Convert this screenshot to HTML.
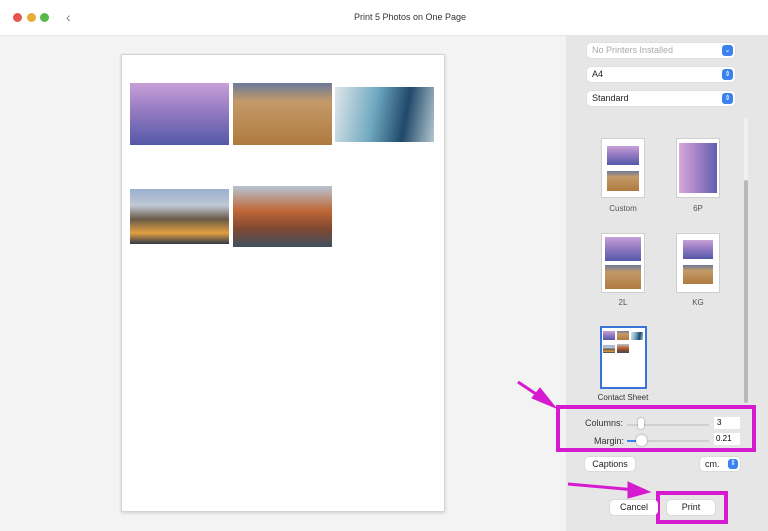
<!DOCTYPE html>
<html><head><meta charset="utf-8"><style>
*{margin:0;padding:0;box-sizing:border-box}
body{width:768px;height:531px;overflow:hidden;background:#f4f4f4;font-family:"Liberation Sans",sans-serif;position:relative}
.abs{position:absolute}
.title{left:0;top:0;width:768px;height:36px;background:#fff;border-bottom:1px solid #e6e6e6}
.dot{width:9px;height:9px;border-radius:50%;top:13px}
.main{left:0;top:36px;width:566px;height:495px;background:#f3f3f3}
.side{left:566px;top:36px;width:202px;height:495px;background:#e6e6e6}
.page{left:121px;top:54px;width:324px;height:458px;background:#fff;border:1px solid #d4d4d4;box-shadow:0 1px 3px rgba(0,0,0,.15)}
.sel{left:587px;width:148px;height:15px;background:#fff;border-radius:4px;font-size:9px;line-height:15px;padding-left:5px;color:#222;box-shadow:0 0 1px rgba(0,0,0,.2)}
.sel i{position:absolute;right:2px;top:2px;width:11px;height:11px;border-radius:3px;background:#3b82f0;color:#fff;font-size:7px;line-height:11px;text-align:center;font-style:normal}
.thumb{background:#fff;border:1px solid #cfcfcf}
.lab{font-size:8px;color:#555;text-align:center;width:80px}
.mt{background:linear-gradient(#c8a0d8 0%,#9a7ec4 40%,#5458a8 100%)}
.sand{background:linear-gradient(#6c7a9a 0%,#c39a68 30%,#b07a40 100%)}
.wave{background:linear-gradient(100deg,#dfe7ea 0%,#6fa8c0 40%,#20486a 70%,#b4c8d0 100%)}
.sier{background:linear-gradient(#9ab0d0 0%,#c0c8d4 30%,#6a5a48 55%,#e0a040 80%,#303848 100%)}
.cap{background:linear-gradient(#b6c4d4 0%,#c06838 40%,#804830 70%,#405060 100%)}
.btn{background:#fff;border-radius:4px;font-size:9px;text-align:center;color:#222;box-shadow:0 0 1px rgba(0,0,0,.3)}
.mg{border:4px solid #d61ad0}
</style></head><body>
<div class="abs title"></div>
<div class="abs dot" style="left:13px;background:#e5574e"></div>
<div class="abs dot" style="left:27px;background:#e8ad35"></div>
<div class="abs dot" style="left:40px;background:#58b848"></div>
<div class="abs" style="left:66px;top:9px;font-size:14px;color:#888">&#8249;</div>
<div class="abs" style="left:0;width:820px;top:12px;text-align:center;font-size:9px;color:#333">Print 5 Photos on One Page</div>
<div class="abs main"></div>
<div class="abs side"></div>
<div class="abs page"></div>
<div class="abs mt" style="left:130px;top:83px;width:99px;height:62px"></div>
<div class="abs sand" style="left:233px;top:83px;width:99px;height:62px"></div>
<div class="abs wave" style="left:335px;top:87px;width:99px;height:55px"></div>
<div class="abs sier" style="left:130px;top:189px;width:99px;height:55px"></div>
<div class="abs cap" style="left:233px;top:186px;width:99px;height:61px"></div>

<div class="abs sel" style="top:43px;color:#aaa">No Printers Installed<i>⌄</i></div>
<div class="abs sel" style="top:67px">A4<i>⇕</i></div>
<div class="abs sel" style="top:91px">Standard<i>⇕</i></div>
<div class="abs" style="left:744px;top:118px;width:4px;height:285px;background:#f0f0f0;border-radius:2px"></div>
<div class="abs" style="left:744px;top:180px;width:4px;height:223px;background:#b8b8b8;border-radius:2px"></div>

<div class="abs thumb" style="left:601px;top:138px;width:44px;height:60px"></div>
<div class="abs mt" style="left:607px;top:146px;width:32px;height:19px"></div>
<div class="abs sand" style="left:607px;top:171px;width:32px;height:20px"></div>
<div class="abs lab" style="left:583px;top:204px">Custom</div>
<div class="abs thumb" style="left:676px;top:138px;width:44px;height:60px"></div>
<div class="abs mt" style="left:679px;top:143px;width:38px;height:50px;background:linear-gradient(90deg,#d8a8d8,#a080c4 50%,#6060b0)"></div>
<div class="abs lab" style="left:658px;top:204px">6P</div>

<div class="abs thumb" style="left:601px;top:233px;width:44px;height:60px"></div>
<div class="abs mt" style="left:605px;top:237px;width:36px;height:24px"></div>
<div class="abs sand" style="left:605px;top:265px;width:36px;height:24px"></div>
<div class="abs lab" style="left:583px;top:298px">2L</div>
<div class="abs thumb" style="left:676px;top:233px;width:44px;height:60px"></div>
<div class="abs mt" style="left:683px;top:240px;width:30px;height:19px"></div>
<div class="abs sand" style="left:683px;top:265px;width:30px;height:19px"></div>
<div class="abs lab" style="left:658px;top:298px">KG</div>

<div class="abs thumb" style="left:600px;top:326px;width:47px;height:63px;border:2px solid #3a72d8"></div>
<div class="abs mt" style="left:603px;top:331px;width:12px;height:9px"></div>
<div class="abs sand" style="left:617px;top:331px;width:12px;height:9px"></div>
<div class="abs wave" style="left:631px;top:332px;width:12px;height:8px"></div>
<div class="abs sier" style="left:603px;top:345px;width:12px;height:8px"></div>
<div class="abs cap" style="left:617px;top:344px;width:12px;height:9px"></div>
<div class="abs lab" style="left:583px;top:393px;color:#333">Contact Sheet</div>

<div class="abs mg" style="left:556px;top:405px;width:200px;height:47px"></div>
<div class="abs" style="left:585px;top:418px;font-size:9px;color:#333">Columns:</div>
<div class="abs" style="left:627px;top:424px;width:82px;height:2px;background:#d0d0d0"></div>
<div class="abs" style="left:638px;top:418px;width:6px;height:11px;background:#fff;border-radius:3px;box-shadow:0 0 2px rgba(0,0,0,.4)"></div>
<div class="abs" style="left:714px;top:417px;width:26px;height:12px;background:#fff;font-size:8px;line-height:12px;padding-left:3px">3</div>
<div class="abs" style="left:594px;top:436px;font-size:9px;color:#333">Margin:</div>
<div class="abs" style="left:627px;top:440px;width:82px;height:2px;background:#d0d0d0"></div>
<div class="abs" style="left:627px;top:440px;width:10px;height:2px;background:#3b82f0"></div>
<div class="abs" style="left:636px;top:435px;width:11px;height:11px;background:#fff;border-radius:50%;box-shadow:0 0 2px rgba(0,0,0,.4)"></div>
<div class="abs" style="left:714px;top:433px;width:26px;height:12px;background:#fff;font-size:8px;line-height:12px;padding-left:2px">0.21</div>

<div class="abs btn" style="left:585px;top:457px;width:50px;height:14px;line-height:14px">Captions</div>
<div class="abs btn" style="left:700px;top:457px;width:40px;height:14px;line-height:14px;text-align:left;padding-left:5px">cm.<span style="position:absolute;right:2px;top:2px;width:10px;height:10px;border-radius:3px;background:#3b82f0;color:#fff;font-size:7px;line-height:10px;text-align:center">⇕</span></div>

<div class="abs mg" style="left:656px;top:491px;width:72px;height:33px"></div>
<div class="abs btn" style="left:610px;top:500px;width:48px;height:15px;line-height:15px">Cancel</div>
<div class="abs btn" style="left:667px;top:500px;width:48px;height:15px;line-height:15px">Print</div>

<svg class="abs" style="left:0;top:0" width="768" height="531">
<g stroke="#d61ad0" fill="#d61ad0">
<line x1="518" y1="382" x2="545" y2="400" stroke-width="3"/>
<polygon points="532,398 556,408 540,388" />
<line x1="568" y1="484" x2="636" y2="490" stroke-width="3"/>
<polygon points="628,482 650,492 628,498"/>
</g>
</svg>
</body></html>
